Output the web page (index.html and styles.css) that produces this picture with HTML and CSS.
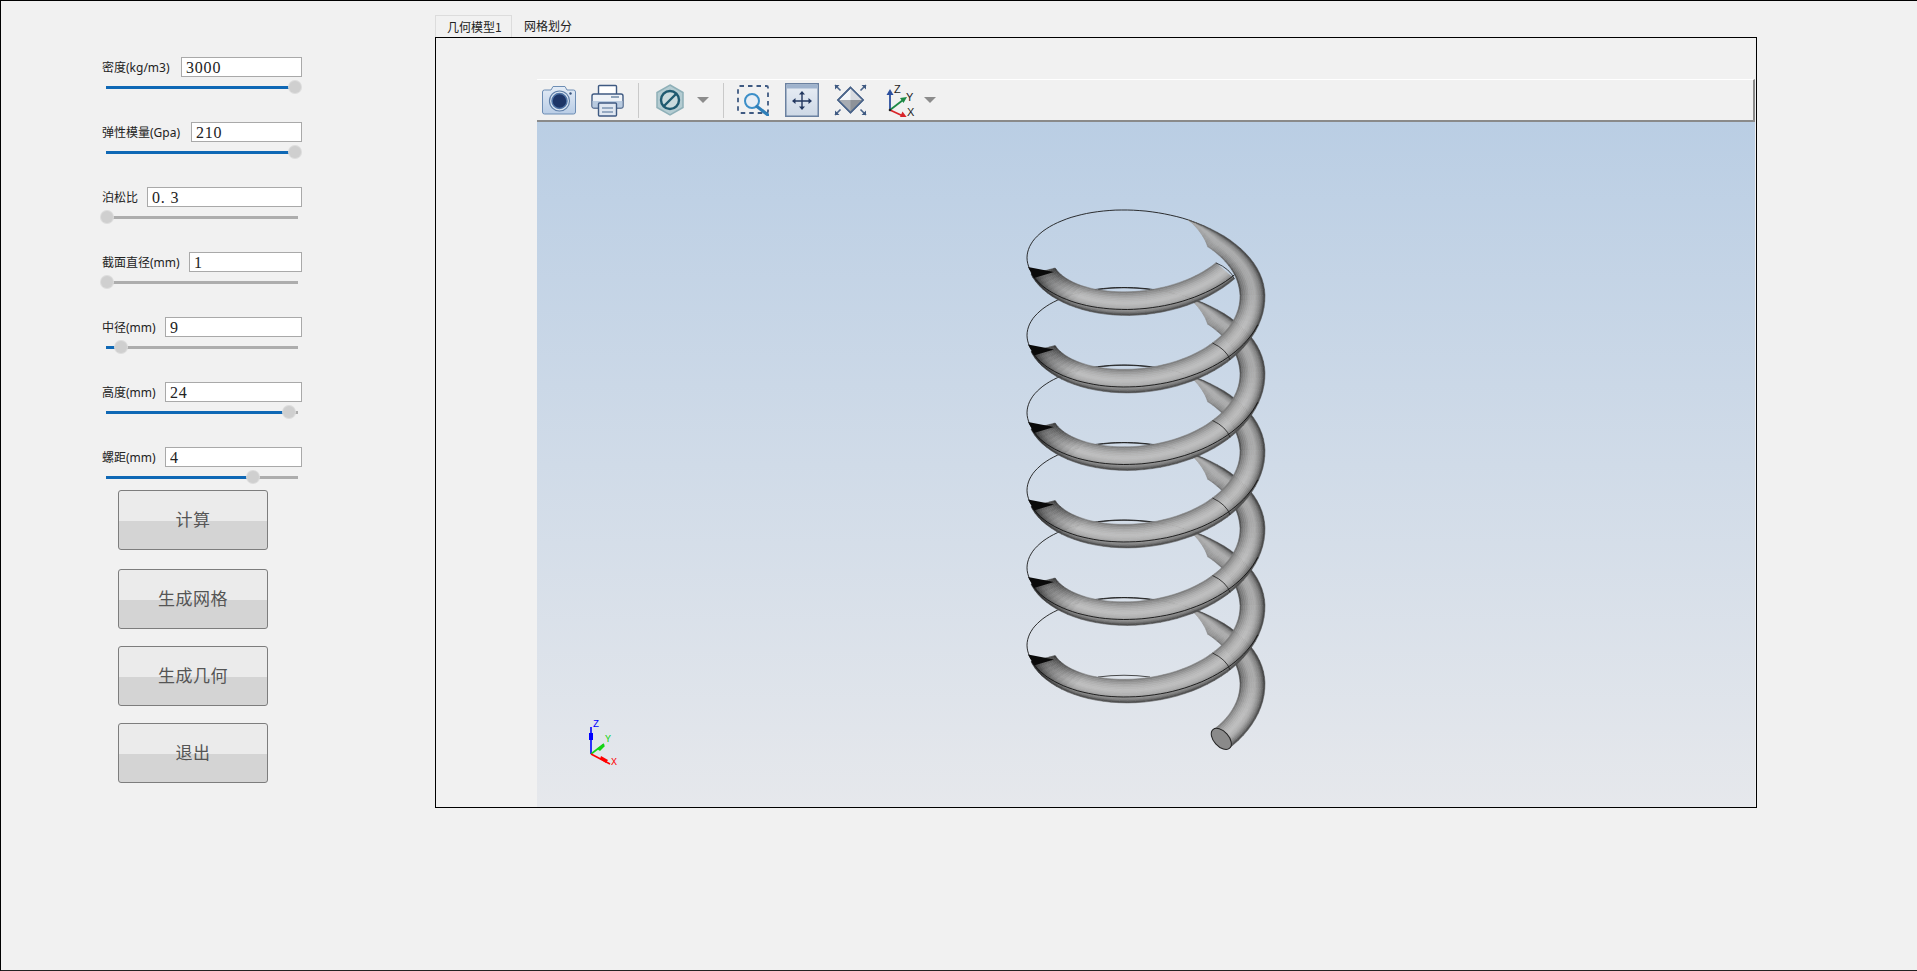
FILE: index.html
```html
<!DOCTYPE html>
<html lang="zh-CN">
<head>
<meta charset="utf-8">
<title>弹簧</title>
<link rel="stylesheet" href="styles.css">
</head>
<body>
<div class="window">
  <aside class="sidebar">
    <div class="param">
      <div class="param-head"><label class="label w-79">密度(kg/m3)</label><input class="field" value="3000"></div>
      <div class="slider"><span class="fill" style="width:189px"></span><span class="handle"></span><span class="rest"></span></div>
    </div>
    <div class="param">
      <div class="param-head"><label class="label w-89">弹性模量(Gpa)</label><input class="field" value="210"></div>
      <div class="slider"><span class="fill" style="width:189px"></span><span class="handle"></span><span class="rest"></span></div>
    </div>
    <div class="param">
      <div class="param-head"><label class="label w-45">泊松比</label><input class="field" value="0. 3"></div>
      <div class="slider"><span class="fill" style="width:1px"></span><span class="handle"></span><span class="rest"></span></div>
    </div>
    <div class="param">
      <div class="param-head"><label class="label w-87">截面直径(mm)</label><input class="field" value="1"></div>
      <div class="slider"><span class="fill" style="width:1px"></span><span class="handle"></span><span class="rest"></span></div>
    </div>
    <div class="param">
      <div class="param-head"><label class="label w-63">中径(mm)</label><input class="field" value="9"></div>
      <div class="slider"><span class="fill" style="width:15px"></span><span class="handle"></span><span class="rest"></span></div>
    </div>
    <div class="param">
      <div class="param-head"><label class="label w-63">高度(mm)</label><input class="field" value="24"></div>
      <div class="slider"><span class="fill" style="width:183px"></span><span class="handle"></span><span class="rest"></span></div>
    </div>
    <div class="param">
      <div class="param-head"><label class="label w-63">螺距(mm)</label><input class="field" value="4"></div>
      <div class="slider"><span class="fill" style="width:147px"></span><span class="handle"></span><span class="rest"></span></div>
    </div>
    <div class="actions">
      <button class="action action-first">计算</button>
      <button class="action action-wide">生成网格</button>
      <button class="action">生成几何</button>
      <button class="action">退出</button>
    </div>
  </aside>

  <main class="main">
    <div class="tabs">
      <div class="tab tab-active">几何模型1</div>
      <div class="tab">网格划分</div>
    </div>
    <section class="pane">
      <div class="viewer">
        <div class="toolbar">
          <svg class="tool tool-camera" width="34" height="30" viewBox="0 0 34 30">
            <defs>
              <linearGradient id="camBody" x1="0" y1="0" x2="0" y2="1"><stop offset="0" stop-color="#e4ecf6"/><stop offset="1" stop-color="#b9cde6"/></linearGradient>
            </defs>
            <path d="M2.5 5H9l2-3.5h12L25 5h6.5A2 2 0 0 1 33.500 7v20a2 2 0 0 1-2 2h-29a2 2 0 0 1-2-2V7a2 2 0 0 1 2-2z" fill="url(#camBody)" stroke="#6d8db4" stroke-width="1"/>
            <circle cx="17.500" cy="16" r="10" fill="#dbe5f2" stroke="#5f7fa8" stroke-width="1.200"/>
            <circle cx="17.500" cy="16" r="7.500" fill="#1d3567" stroke="#4f74a6" stroke-width="1.500"/>
            <circle cx="28.500" cy="8.500" r="1.200" fill="#39557f"/>
          </svg>
          <svg class="tool tool-printer" width="33" height="33" viewBox="0 0 33 33">
            <rect x="7.500" y="1.500" width="18" height="11" rx="1" fill="#fff" stroke="#3f5a82" stroke-width="1.400"/>
            <path d="M3 10h27a2 2 0 0 1 2 2v10a2 2 0 0 1-2 2H3a2 2 0 0 1-2-2V12a2 2 0 0 1 2-2z" fill="#eef2f7" stroke="#3f5a82" stroke-width="1.400"/>
            <rect x="1.500" y="17" width="30" height="6.500" fill="#b9cbe0"/>
            <rect x="20" y="12" width="8" height="2" fill="#8fa3ba"/>
            <rect x="7.500" y="19" width="18" height="13" rx="1" fill="#dfe7f1" stroke="#3f5a82" stroke-width="1.400"/>
            <path d="M11 24h11M11 28h11" stroke="#7e95b3" stroke-width="1.400"/>
          </svg>
          <span class="tool-sep sep-first"></span>
          <svg class="tool tool-hex" width="32" height="32" viewBox="0 0 32 32">
            <polygon points="16,1 29,8.500 29,23.500 16,31 3,23.500 3,8.500" fill="#b4ccd2" stroke="#8fb0b8" stroke-width="1.500"/>
            <circle cx="16" cy="16" r="9" fill="#c9dadd" stroke="#1f5a70" stroke-width="2.400"/>
            <path d="M10 22 22 10" stroke="#1f5a70" stroke-width="2.400"/>
          </svg>
          <span class="caret caret-hex"></span>
          <span class="tool-sep sep-second"></span>
          <svg class="tool tool-zoombox" width="32" height="31" viewBox="0 0 32 31">
            <rect x="1" y="1" width="30" height="27" rx="1.500" fill="none" stroke="#3f5a82" stroke-width="1.800" stroke-dasharray="4.500 4"/>
            <circle cx="15" cy="16" r="7" fill="#e8eef5" stroke="#3c8fc8" stroke-width="2"/>
            <path d="M20 21.500 31 30" stroke="#2f7fb9" stroke-width="3.200" stroke-linecap="round"/>
          </svg>
          <svg class="tool tool-pan" width="34" height="34" viewBox="0 0 34 34">
            <defs>
              <linearGradient id="panBody" x1="0" y1="0" x2="0" y2="1"><stop offset="0" stop-color="#e9eef5"/><stop offset="1" stop-color="#cdd8e6"/></linearGradient>
            </defs>
            <rect x=".75" y=".75" width="32.500" height="32.500" fill="url(#panBody)" stroke="#6b81a0" stroke-width="1.500"/>
            <rect x="1.500" y="1.500" width="31" height="4" fill="#9fb3cd"/>
            <path d="M17 10v15M9.500 18h15" stroke="#22375f" stroke-width="1.400"/>
            <path d="M17 8l-3 3.500h6zM17 27l-3-3.500h6zM7 18l3.500-3v6zM27 18l-3.500-3v6z" fill="#22375f"/>
          </svg>
          <svg class="tool tool-fit" width="33" height="32" viewBox="0 0 33 32">
            <polygon points="16.500,3.500 29,16 16.500,28.500 4,16" fill="#f2f4f7" stroke="#4a648a" stroke-width="1.600"/>
            <polygon points="4,16 29,16 16.500,28.500" fill="#a9adb3"/>
            <polygon points="16.500,3.500 29,16 16.500,16" fill="#d8dbe0"/>
            <polygon points="16.500,16 29,16 16.500,28.500" fill="#8e9298"/>
            <polygon points="16.500,3.500 29,16 16.500,28.500 4,16" fill="none" stroke="#4a648a" stroke-width="1.600"/>
            <path d="M1 1l5.500 5.500M32 1l-5.500 5.500M1 31l5.500-5.500M32 31l-5.500-5.500" stroke="#4a648a" stroke-width="1.600"/>
            <path d="M1 1h4.500L1 5.500zM32 1h-4.500L32 5.500zM1 31h4.500L1 26.500zM32 31h-4.500L32 26.500z" fill="#3f5a82"/>
          </svg>
          <svg class="tool tool-axes" width="32" height="34" viewBox="0 0 32 34">
            <path d="M6 27V9" stroke="#2b4f9e" stroke-width="1.800"/>
            <path d="M6 6l-3.500 6h7z" fill="#2b4f9e"/>
            <path d="M6 27 19 17" stroke="#1e8a45" stroke-width="1.800"/>
            <path d="M23 14l-7 1 3.500 5z" fill="#1e8a45"/>
            <path d="M6 27 19 33" stroke="#d9252a" stroke-width="1.800"/>
            <path d="M23 34.500l-7-.5 2.500-5.500z" fill="#d9252a"/>
            <circle cx="6" cy="27" r="1.300" fill="#222"/>
            <text class="axis-letter" x="10" y="10">Z</text>
            <text class="axis-letter" x="22" y="18">Y</text>
            <text class="axis-letter" x="23" y="33">X</text>
          </svg>
          <span class="caret caret-axes"></span>
        </div>
        <div class="viewport">
          <svg id="spring" class="spring" viewBox="537 122 1218 684"></svg>
          <svg class="triad" width="40" height="50" viewBox="0 0 40 50">
            <path d="M11 35V8" stroke="#0000ff" stroke-width="1.600"/>
            <path d="M9 14h4v7H9z" fill="#0000ff"/>
            <path d="M11 35 24 25" stroke="#14d414" stroke-width="1.600"/>
            <path d="M17 30l6-5 2 2-5 5z" fill="#14d414"/>
            <path d="M11 35 30 45" stroke="#ff0000" stroke-width="1.600"/>
            <path d="M21 37l7 4-2 3-6-4z" fill="#ff0000"/>
            <text class="triad-letter triad-z" x="13" y="8">Z</text>
            <text class="triad-letter triad-y" x="25" y="23">Y</text>
            <text class="triad-letter triad-x" x="31" y="46">X</text>
          </svg>
        </div>
      </div>
    </section>
  </main>
</div>
<script src="spring.js"></script>
</body>
</html>
```
FILE: styles.css
```css
* { box-sizing: border-box; }
html, body { margin: 0; padding: 0; }
body { background: #f1f1f1; overflow: hidden; }

.window {
  width: 1917px;
  height: 971px;
  display: flex;
  align-items: flex-start;
  background: #f1f1f1;
  border-top: 1px solid #000;
  border-left: 1px solid #000;
  border-bottom: 1px solid #222;
  font-family: "Noto Sans", "Noto Sans CJK SC", sans-serif;
}

/* Left parameter column */
.sidebar {
  width: 200px;
  margin-left: 101px;
  margin-top: 56px;
  display: flex;
  flex-direction: column;
}
.param { height: 65px; }
.param-head { display: flex; align-items: center; height: 20px; }
.label {
  flex: none;
  height: 20px;
  padding-top: 1px;
  font-size: 12px;
  line-height: 20px;
  color: #222;
  white-space: nowrap;
}
.w-79 { width: 79px; }
.w-89 { width: 89px; }
.w-45 { width: 45px; }
.w-87 { width: 87px; }
.w-63 { width: 63px; }
.field {
  flex: 1;
  min-width: 0;
  height: 20px;
  padding: 1px 0 0 4px;
  border: 1px solid #a9a9a9;
  border-radius: 0;
  background: #fff;
  outline: none;
  color: #222;
  font-family: "Liberation Serif", serif;
  font-size: 16px;
  letter-spacing: .8px;
}
.slider {
  display: flex;
  align-items: center;
  width: 192px;
  height: 14px;
  margin: 3px 0 0 4px;
}
.fill { flex: none; height: 3px; background: #0f68b5; }
.rest { flex: 1; height: 3px; background: #adadad; }
.handle {
  flex: none;
  position: relative;
  z-index: 1;
  width: 12px;
  height: 12px;
  margin: 0 -6px;
  border-radius: 50%;
  background: #cfcfcf;
  box-shadow: 0 0 0 1px #dcdcdc;
}

.actions { display: flex; flex-direction: column; margin-top: -22px; margin-left: 16px; }
.action {
  width: 150px;
  height: 60px;
  margin-top: 17px;
  padding: 0 0 3px;
  border: 1px solid #7d7d7d;
  border-radius: 3px;
  background: linear-gradient(to bottom, #ebebeb 0, #ebebeb 51%, #d4d4d4 52%, #d4d4d4 100%);
  color: #555;
  font-family: "Noto Sans CJK SC", sans-serif;
  font-size: 17px;
  letter-spacing: .5px;
}
.action-first { margin-top: 0; }
.action-wide { margin-top: 19px; }

/* Tabs and pane */
.main { margin-left: 133px; margin-top: 14px; width: 1322px; }
.tabs { display: flex; height: 22px; }
.tab {
  height: 22px;
  padding: 0 12px;
  font-family: "Noto Sans CJK SC", sans-serif;
  font-size: 12px;
  line-height: 22px;
  color: #222;
  white-space: nowrap;
}
.tab-active {
  width: 77px;
  padding: 0 0 0 11px;
  border: 1px solid #dcdcdc;
  border-bottom: 0;
}
.pane {
  height: 771px;
  padding: 41px 1px 0 101px;
  border: 1px solid #000;
}
.viewer { display: flex; flex-direction: column; height: 728px; }

.toolbar {
  flex: none;
  display: flex;
  align-items: center;
  height: 43px;
  padding-left: 5px;
  background: #f1f1f1;
  border-top: 1px solid #fff;
  border-right: 2px solid #8a8a8a;
  border-bottom: 2px solid #8a8a8a;
}
.tool { flex: none; display: block; }
.tool-printer { margin-left: 15px; }
.tool-sep { flex: none; width: 1px; height: 35px; background: #c9c9c9; }
.sep-first { margin-left: 14px; }
.tool-hex { margin-left: 15px; }
.caret {
  flex: none;
  width: 0;
  height: 0;
  border-left: 6px solid transparent;
  border-right: 6px solid transparent;
  border-top: 6px solid #8c8c8c;
}
.caret-hex { margin-left: 11px; }
.sep-second { margin-left: 14px; }
.tool-zoombox { margin-left: 13px; }
.tool-pan { margin-left: 16px; }
.tool-fit { margin-left: 15px; }
.tool-axes { margin-left: 17px; }
.caret-axes { margin-left: 8px; }
.axis-letter { font-family: "Liberation Sans", sans-serif; font-size: 11px; fill: #222; }

.viewport {
  position: relative;
  flex: 1;
  background: linear-gradient(to bottom, #bacee4 0%, #e6e8ec 100%);
  overflow: hidden;
}
.spring { position: absolute; left: 0; top: 0; width: 1218px; height: 684px; }
.triad { position: absolute; left: 43px; top: 597px; }
.triad-letter { font-family: "Liberation Mono", monospace; font-size: 10px; }
.triad-z { fill: #0000ff; }
.triad-y { fill: #14d414; }
.triad-x { fill: #ff0000; }
```
FILE: spring.js
```js
// Draws the helical spring procedurally: a projected helix between an inner
// and an outer curve, shaded band by band across the tube.
(function () {
  var P = 77.5, CX = 1146, CY = 219, D = Math.PI / 180, END = 2205, BANDS = 14, STEP = 4;
  var TIP = 291, TIP_END = 311;
  var out = [];

  function inner(t) {
    var s = Math.sin(t * D);
    return [CX + 94 * Math.cos(t * D), CY + 52 * s + P * t / 360];
  }
  function outer(t) {
    var s = Math.sin(t * D);
    return [CX + 119 * Math.cos(t * D), CY + (s > 0 ? 76 : 66) * s + P * t / 360];
  }
  function lerp(a, b, u) { return [a[0] + (b[0] - a[0]) * u, a[1] + (b[1] - a[1]) * u]; }
  function mod(t) { return ((t % 360) + 360) % 360; }
  // Inner edge closes onto the outer edge where the tube emerges at the back.
  function innerT(t) {
    var a = mod(t);
    if (a >= TIP && a < TIP_END) return lerp(outer(t), inner(t), (a - TIP) / (TIP_END - TIP));
    return inner(t);
  }
  function at(t, u) { return lerp(innerT(t), outer(t), u); }

  var FRONT = [[0, 115], [.08, 140], [.28, 175], [.5, 192], [.7, 172], [.8, 145], [.9, 115], [1, 60]];
  var SIDE = [[0, 60], [.1, 115], [.4, 165], [.6, 170], [.85, 125], [1, 55]];
  function table(tb, u) {
    for (var i = 1; i < tb.length; i++) {
      if (u <= tb[i][0]) {
        var k = (u - tb[i - 1][0]) / (tb[i][0] - tb[i - 1][0]);
        return tb[i - 1][1] + (tb[i][1] - tb[i - 1][1]) * k;
      }
    }
    return tb[tb.length - 1][1];
  }
  function shade(t, u) {
    var s = Math.max(0, Math.min(1, (Math.sin(t * D) + .1) / .5));
    var v = table(FRONT, u) * s + table(SIDE, u) * (1 - s);
    var a = mod(t);
    if (a > 130 && a < 180) v *= 1 - .5 * (a - 130) / 35;
    // The tapered tip at the back is pale on its inner side.
    if (a >= TIP && a < 340) v += (180 - v) * (1 - (a - TIP) / (340 - TIP)) * (1 - u);
    v = Math.round(v);
    return "rgb(" + v + "," + v + "," + v + ")";
  }
  function pt(p) { return p[0].toFixed(1) + " " + p[1].toFixed(1); }

  function tube(t0, t1) {
    for (var t = t0; t < t1; t += STEP) {
      var e = Math.min(t + STEP, t1);
      for (var b = 0; b < BANDS; b++) {
        var u0 = b / BANDS, u1 = (b + 1) / BANDS, c = shade(t + STEP / 2, (u0 + u1) / 2);
        out.push('<polygon points="' + pt(at(t, u0)) + " " + pt(at(e, u0)) + " " + pt(at(e, u1)) + " " + pt(at(t, u1)) +
          '" fill="' + c + '" stroke="' + c + '" stroke-width=".5"/>');
      }
    }
  }
  function curve(fn, t0, t1, w, col) {
    var d = "";
    for (var t = t0; t <= t1; t += 3) d += (d ? "L" : "M") + pt(fn(t));
    out.push('<path d="' + d + '" fill="none" stroke="' + col + '" stroke-width="' + w + '"/>');
  }
  function backOuter(t) {
    return [CX + 119 * Math.cos(t * D), CY + 66 * Math.sin(t * D) + P * t / 360];
  }
  function edge(t) {
    var s = Math.sin(t * D);
    return [CX + 119 * Math.cos(t * D) , CY + 70 * s + P * t / 360];
  }
  function tip(k) {
    var y = P * k;
    out.push('<polygon points="1028,' + (267 + y) + " 1054," + (272 + y) + " 1034," + (278 + y) + '" fill="#0a0a0a"/>');
  }
  function innerArc(k) {
    var y = P * k;
    out.push('<path d="M1098 ' + (289.5 + y) + "Q1124 " + (286 + y) + " 1150 " + (289.5 + y) + '" fill="none" stroke="#222" stroke-width=".8"/>');
  }
  function joint(t) {
    var a = inner(t), b = outer(t), c = [(a[0] + b[0]) / 2 + 5, (a[1] + b[1]) / 2 - 2];
    out.push('<path d="M' + pt(a) + "Q" + pt(c) + " " + pt(b) + '" fill="none" stroke="#1c1c1c" stroke-width=".8"/>');
  }

  for (var k = 5; k >= 0; k--) {
    var st = TIP + 360 * k, en = Math.min(525 + 360 * k, END);
    curve(backOuter, 165 + 360 * k, st, .9, "#1a1a1a");
    innerArc(k);
    tube(st, en);
    if (en < END) {
      curve(edge, 380 + 360 * k, en, .9, "#111");
      tip(k + 1);
      joint(405 + 360 * k);
    } else {
      var a = inner(END), b = outer(END), cx = (a[0] + b[0]) / 2, cy = (a[1] + b[1]) / 2;
      out.push('<ellipse cx="' + cx.toFixed(1) + '" cy="' + cy.toFixed(1) + '" rx="12.500" ry="7.500" transform="rotate(48 ' +
        cx.toFixed(1) + " " + cy.toFixed(1) + ')" fill="#8a8a8a" stroke="#222" stroke-width="1"/>');
    }
  }
  tube(42, 165);
  curve(edge, 42, 165, .9, "#111");
  tip(0);
  joint(42);

  document.getElementById("spring").innerHTML = out.join("");
})();
```
